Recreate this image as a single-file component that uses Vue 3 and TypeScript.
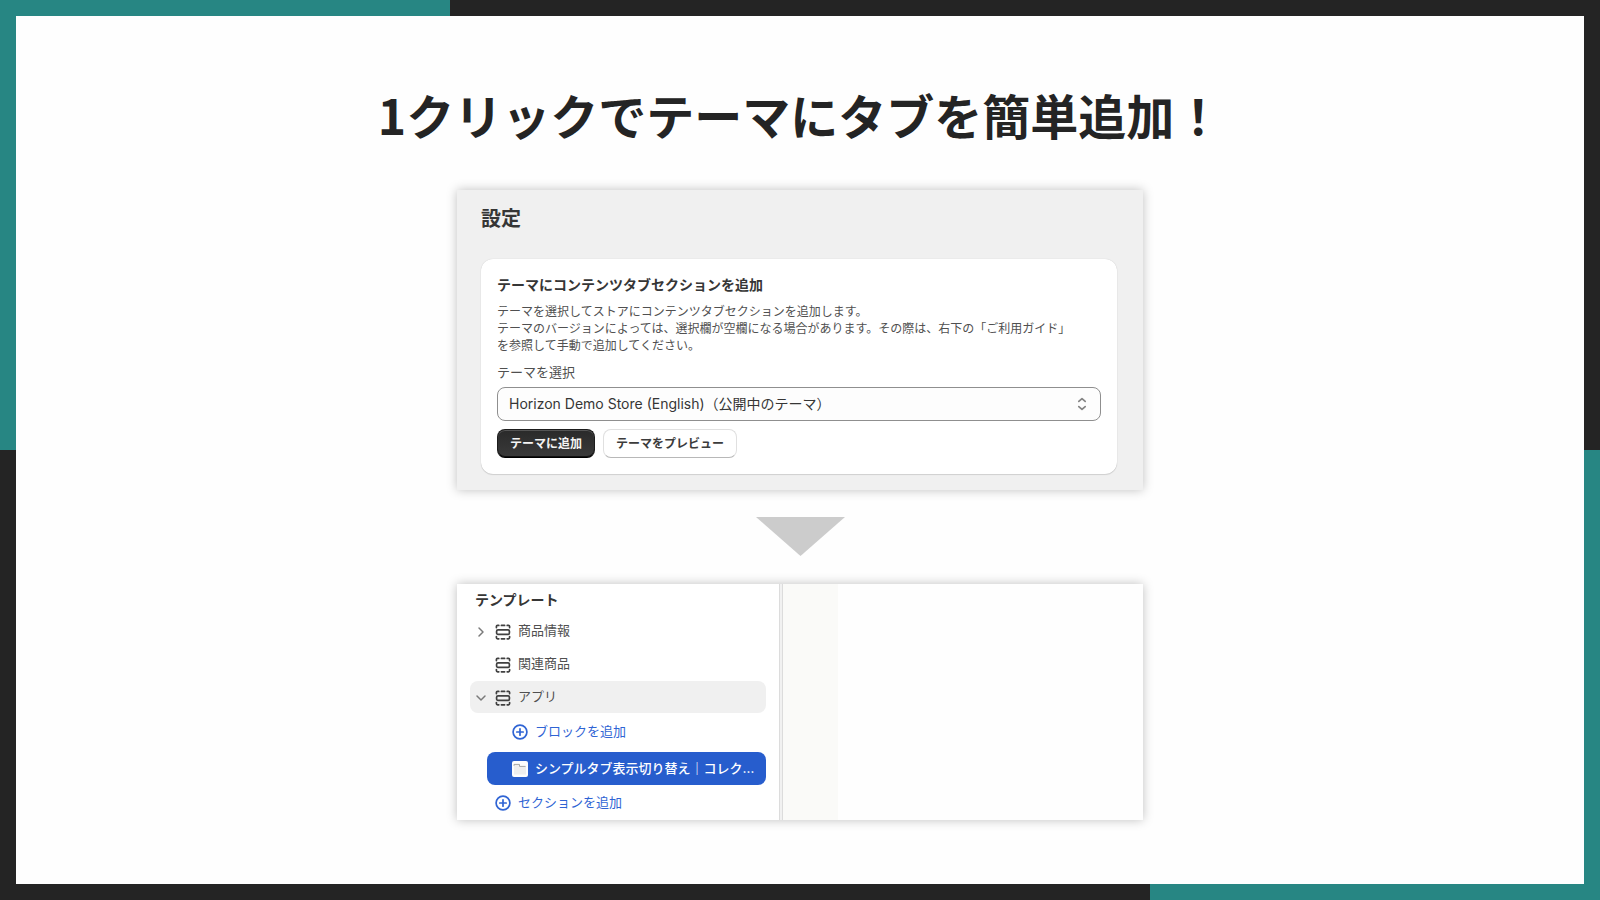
<script setup lang="ts">
import { ref } from 'vue'

interface TreeRow {
  label: string
  kind: 'section' | 'group' | 'add-block' | 'app' | 'add-section'
  chevron?: 'right' | 'down'
}

const themes = ['Horizon Demo Store (English)（公開中のテーマ）']
const selectedTheme = ref(themes[0])

const rows: TreeRow[] = [
  { label: '商品情報', kind: 'section', chevron: 'right' },
  { label: '関連商品', kind: 'section' },
  { label: 'アプリ', kind: 'group', chevron: 'down' },
  { label: 'ブロックを追加', kind: 'add-block' },
  { label: 'シンプルタブ表示切り替え｜コレク…', kind: 'app' },
  { label: 'セクションを追加', kind: 'add-section' },
]

const hasChevronSlot = (row: TreeRow) => row.kind === 'section' || row.kind === 'group'
const isAdd = (row: TreeRow) => row.kind === 'add-block' || row.kind === 'add-section'
</script>

<template>
  <main class="stage">
    <div class="sheet">
      <h1 class="title">1クリックでテーマにタブを簡単追加！</h1>

      <section class="panel settings">
        <h2 class="settings-title">設定</h2>
        <div class="card">
          <h3 class="card-title">テーマにコンテンツタブセクションを追加</h3>
          <p class="card-text">
            テーマを選択してストアにコンテンツタブセクションを追加します。<br />テーマのバージョンによっては、選択欄が空欄になる場合があります。その際は、右下の「ご利用ガイド」<br />を参照して手動で追加してください。
          </p>
          <label class="field-label" for="theme">テーマを選択</label>
          <div class="select-wrap">
            <select id="theme" v-model="selectedTheme" class="select">
              <option v-for="theme in themes" :key="theme" :value="theme">{{ theme }}</option>
            </select>
            <svg class="select-icon" viewBox="0 0 12 16" aria-hidden="true">
              <path d="M2.8 5.4 L6 2.6 L9.2 5.4 M2.8 10.6 L6 13.4 L9.2 10.6" />
            </svg>
          </div>
          <div class="actions">
            <button type="button" class="btn primary">テーマに追加</button>
            <button type="button" class="btn">テーマをプレビュー</button>
          </div>
        </div>
      </section>

      <svg class="arrow" viewBox="0 0 89 39" aria-hidden="true">
        <path d="M0 0 H89 L44.5 39 Z" />
      </svg>

      <section class="panel editor">
        <div class="sidebar">
          <h2 class="sidebar-title">テンプレート</h2>
          <ul class="tree">
            <li v-for="row in rows" :key="row.label" :class="{ nested: row.kind === 'app' }">
              <button type="button" class="row" :class="row.kind">
                <span v-if="hasChevronSlot(row)" class="chevron">
                  <svg v-if="row.chevron === 'right'" viewBox="0 0 14 14" aria-hidden="true">
                    <path d="M5 3 L9 7 L5 11" />
                  </svg>
                  <svg v-else-if="row.chevron === 'down'" viewBox="0 0 14 14" aria-hidden="true">
                    <path d="M3 5 L7 9 L11 5" />
                  </svg>
                </span>
                <svg v-if="hasChevronSlot(row)" class="icon line" viewBox="0 0 16 16" aria-hidden="true">
                  <rect x="1.6" y="5.8" width="12.8" height="4.6" rx="1.4" />
                  <path d="M1.4 3.6 V2.6 Q1.4 1.4 2.6 1.4 H3.8 M6.4 1.4 H9.6 M12.2 1.4 H13.4 Q14.6 1.4 14.6 2.6 V3.6" />
                  <path d="M1.4 12.6 V13.6 Q1.4 14.8 2.6 14.8 H3.8 M6.4 14.8 H9.6 M12.2 14.8 H13.4 Q14.6 14.8 14.6 13.6 V12.6" />
                </svg>
                <svg v-else-if="isAdd(row)" class="icon line" viewBox="0 0 16 16" aria-hidden="true">
                  <circle cx="8" cy="8" r="6.9" />
                  <path d="M8 4.8 V11.2 M4.8 8 H11.2" />
                </svg>
                <svg v-else class="icon" viewBox="0 0 16 16" aria-hidden="true">
                  <rect width="16" height="16" rx="2" fill="#fdfdfd" />
                  <path d="M2 13.5 V3.5 H7.5 V5.5 H14 V13.5 Z" fill="#eee" />
                  <path d="M2 4.8 V3.4 H7.5 V5.4 H13.6" fill="none" stroke="#a6a6a6" />
                </svg>
                <span class="row-label">{{ row.label }}</span>
              </button>
            </li>
          </ul>
        </div>
        <div class="splitter"></div>
        <div class="gutter"></div>
        <div class="canvas"></div>
      </section>
    </div>
  </main>
</template>

<style>
body {
  margin: 0;
}
</style>

<style scoped>
* {
  box-sizing: border-box;
}

.stage {
  min-height: 100vh;
  padding: 16px;
  display: flex;
  background:
    linear-gradient(#278683, #278683) left top / 450px 450px no-repeat,
    linear-gradient(#278683, #278683) right bottom / 450px 450px no-repeat,
    #242424;
  font-family: Inter, 'Noto Sans CJK JP', sans-serif;
  color: #363636;
}

.sheet {
  flex: 1;
  padding: 68px 0 64px;
  display: flex;
  flex-direction: column;
  align-items: center;
  background: #fefefe;
}

.title {
  margin: 0 0 46px;
  font-family: 'Noto Sans CJK JP', sans-serif;
  font-size: 48px;
  line-height: 60px;
  font-weight: 700;
  color: #242424;
}

.panel {
  width: 43.75%;
  min-width: 660px;
  box-shadow: 0 0 10px rgba(0, 0, 0, 0.25);
}

.settings {
  padding: 15px 26px 16px 24px;
  background: #f0f0f0;
}

.settings-title {
  margin: 0 0 26px;
  font-size: 20px;
  line-height: 28px;
  font-weight: 700;
}

.card {
  padding: 15px 16px 16px;
  border-radius: 12px;
  background: #fff;
  box-shadow: 0 1px 1px rgba(0, 0, 0, 0.12), 0 0 1px rgba(0, 0, 0, 0.2);
}

.card-title {
  margin: 0 0 7px;
  font-size: 14px;
  line-height: 22px;
  font-weight: 700;
}

.card-text {
  margin: 0 0 8px;
  font-size: 12px;
  line-height: 17px;
  color: #505050;
}

.field-label {
  display: block;
  margin-bottom: 5px;
  font-size: 13px;
  line-height: 20px;
  color: #505050;
}

.select-wrap {
  display: grid;
  align-items: center;
  margin-bottom: 8px;
}

.select {
  grid-area: 1 / 1;
  width: 100%;
  height: 34px;
  padding: 0 36px 2px 11px;
  border: 1px solid #8f8f8f;
  border-radius: 8px;
  background: #fdfdfd;
  appearance: none;
  font-family: inherit;
  font-size: 14px;
  color: #363636;
}

.select-icon {
  grid-area: 1 / 1;
  justify-self: end;
  width: 12px;
  height: 16px;
  margin-right: 13px;
  fill: none;
  stroke: #858585;
  stroke-width: 1.7;
  stroke-linecap: round;
  stroke-linejoin: round;
  pointer-events: none;
}

.actions {
  display: flex;
  gap: 8px;
}

.btn {
  height: 29px;
  padding: 0 12px 2px;
  border: 1px solid #e0e0e0;
  border-bottom-color: #b8b8b8;
  border-radius: 8px;
  background: #fff;
  font-family: inherit;
  font-size: 12px;
  font-weight: 700;
  color: #3c3c3c;
}

.btn.primary {
  border-color: #1c1c1c;
  border-bottom-color: #000;
  background: linear-gradient(#2a2a2a, #3a3a3a);
  box-shadow: inset 0 1px 0 #555, inset 0 -1px 0 #111;
  color: #f4f4f4;
}

.arrow {
  width: 89px;
  height: 39px;
  margin: 27px 0 28px;
  fill: #ccc;
}

.editor {
  display: flex;
  min-height: 236px;
  background: #fff;
}

.sidebar {
  width: 322px;
  padding: 5px 13px 0;
}

.sidebar-title {
  margin: 0 0 4px;
  padding-left: 5px;
  font-size: 14px;
  line-height: 22px;
  font-weight: 700;
}

.tree {
  margin: 0;
  padding: 0;
  display: flex;
  flex-direction: column;
  gap: 1px;
  list-style: none;
}

.nested {
  padding-left: 17px;
}

.row {
  width: 100%;
  height: 32px;
  padding: 0 4px;
  display: flex;
  align-items: center;
  gap: 7px;
  border: 0;
  border-radius: 8px;
  background: transparent;
  font-family: inherit;
  font-size: 13px;
  line-height: 20px;
  text-align: left;
  color: #505050;
}

.row.section,
.row.group {
  padding-top: 2px;
}

.row.group {
  background: #f0f0f0;
}

.row.add-block {
  height: 37px;
  padding: 0 0 2px 42px;
  color: #2f64d4;
}

.row.app {
  height: 33px;
  padding: 0 8px 0 25px;
  background: #275dcd;
  font-weight: 500;
  color: #fff;
}

.row.add-section {
  height: 34px;
  padding-left: 25px;
  color: #2f64d4;
}

.row-label {
  padding-bottom: 2px;
  white-space: nowrap;
}

.section .row-label,
.group .row-label {
  padding-bottom: 4px;
}

.chevron {
  width: 14px;
  height: 14px;
  flex: none;
  fill: none;
  stroke: #7a7a7a;
  stroke-width: 1.5;
  stroke-linecap: round;
  stroke-linejoin: round;
}

.chevron svg {
  display: block;
}

.icon {
  width: 16px;
  height: 16px;
  flex: none;
}

.icon.line {
  fill: none;
  stroke: currentColor;
  stroke-width: 1.7;
  stroke-linecap: round;
}

.section .icon,
.group .icon {
  stroke: #404040;
}

.splitter {
  width: 4px;
  border: solid #dcdcdc;
  border-width: 0 1px;
  background: #f1f1f1;
}

.gutter {
  width: 55px;
  background: #fafaf8;
}

.canvas {
  flex: 1;
  background: #fefefe;
}
</style>
